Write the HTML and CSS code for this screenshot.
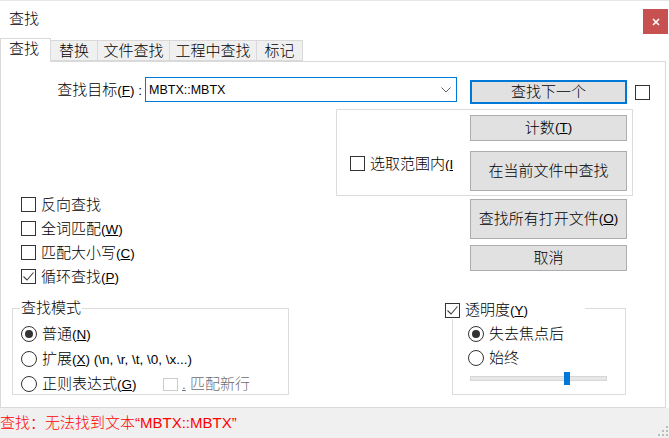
FILE: index.html
```html
<!DOCTYPE html>
<html lang="zh-CN">
<head>
<meta charset="utf-8">
<title>查找</title>
<link rel="stylesheet" href="styles.css">
</head>
<body>
<div class="dialog">
  <div class="titlebar">
    <span class="title">查找</span>
    <div class="close"><svg width="8" height="8" viewBox="0 0 8 8"><path d="M1 1 L7 7 M7 1 L1 7" stroke="#fff" stroke-width="1.6" fill="none"/></svg></div>
  </div>
  <div class="tabs">
    <div class="tab active">查找</div>
    <div class="tab t1">替换</div>
    <div class="tab t2">文件查找</div>
    <div class="tab t3">工程中查找</div>
    <div class="tab t4">标记</div>
  </div>
  <div class="panel">
    <div class="row1">
      <div class="find-label">查找目标<span class="k">(<u>F</u>) :</span></div>
      <div class="combo"><span class="combo-text">MBTX::MBTX</span><svg class="chev" width="10" height="6" viewBox="0 0 10 6"><polyline points="0.5,0.5 5,5 9.5,0.5" stroke="#606060" stroke-width="1" fill="none"/></svg></div>
      <div class="btn default">查找下一个</div>
      <span class="box"></span>
    </div>
    <div class="selgroup">
      <div class="check sel"><span class="box"></span><span class="txt">选取范围内<span class="k">(<u>I</u>)</span></span></div>
      <div class="btncol">
        <div class="btn h26">计数<span class="k">(<u>T</u>)</span></div>
        <div class="btn h40">在当前文件中查找</div>
      </div>
    </div>
    <div class="row3">
      <div class="checks">
        <div class="check"><span class="box"></span><span>反向查找</span></div>
        <div class="check"><span class="box"></span><span>全词匹配<span class="k">(<u>W</u>)</span></span></div>
        <div class="check"><span class="box"></span><span>匹配大小写<span class="k">(<u>C</u>)</span></span></div>
        <div class="check"><span class="box"><svg width="13" height="13" viewBox="0 0 13 13"><polyline points="1.5,6.5 5,10 11.5,2.5" stroke="#404040" stroke-width="1.1" fill="none"/></svg></span><span>循环查找<span class="k">(<u>P</u>)</span></span></div>
      </div>
      <div class="btncol2">
        <div class="btn h40">查找所有打开文件<span class="k">(<u>O</u>)</span></div>
        <div class="btn h26">取消</div>
      </div>
    </div>
    <div class="row4">
      <div class="group mode">
        <div class="legend">查找模式</div>
        <div class="radios">
          <div class="radio"><span class="circle on"></span><span>普通<span class="k">(<u>N</u>)</span></span></div>
          <div class="radio"><span class="circle"></span><span>扩展<span class="k">(<u>X</u>) (\n, \r, \t, \0, \x...)</span></span></div>
          <div class="radio"><span class="circle"></span><span class="rx-text">正则表达式<span class="k">(<u>G</u>)</span></span>
            <div class="check disabled"><span class="box"></span><span><u class="k">.</u> 匹配新行</span></div>
          </div>
        </div>
      </div>
      <div class="group trans">
        <div class="tlegend"><span class="box"><svg width="13" height="13" viewBox="0 0 13 13"><polyline points="1.5,6.5 5,10 11.5,2.5" stroke="#404040" stroke-width="1.1" fill="none"/></svg></span><span>透明度<span class="k">(<u>Y</u>)</span></span></div>
        <div class="radios tr">
          <div class="radio"><span class="circle on"></span><span>失去焦点后</span></div>
          <div class="radio"><span class="circle"></span><span>始终</span></div>
        </div>
        <div class="slider"><div class="track"></div><div class="thumb"></div></div>
      </div>
    </div>
  </div>
  <div class="status">
    <span class="msg">查找：无法找到文本“MBTX::MBTX”</span>
    <svg class="grip" width="13" height="13" viewBox="0 0 13 13">
      <rect x="10" y="2" width="2" height="2" fill="#bdbdbd"/>
      <rect x="6" y="6" width="2" height="2" fill="#bdbdbd"/>
      <rect x="10" y="6" width="2" height="2" fill="#bdbdbd"/>
      <rect x="2" y="10" width="2" height="2" fill="#bdbdbd"/>
      <rect x="6" y="10" width="2" height="2" fill="#bdbdbd"/>
      <rect x="10" y="10" width="2" height="2" fill="#bdbdbd"/>
    </svg>
  </div>
</div>
</body>
</html>
```
FILE: styles.css
```css
* { box-sizing: border-box; }
html, body { margin: 0; padding: 0; }
body {
  width: 669px;
  height: 438px;
  overflow: hidden;
  background: #fff;
  font-family: "Liberation Sans", "Noto Sans CJK SC", sans-serif;
  font-size: 15px;
  font-weight: 300;
  line-height: 20px;
  color: #000;
}
.dialog { display: flex; flex-direction: column; height: 438px; }

.titlebar {
  height: 38px;
  border-top: 1px solid #e6e6e6;
  display: flex;
  align-items: flex-start;
  flex: none;
}
.title { margin: 8px 0 0 9px; line-height: 20px; }
.close {
  margin: 8px 1px 0 auto;
  width: 25px;
  height: 25px;
  background: #c75050;
  display: flex;
  align-items: center;
  justify-content: center;
}

.tabs { height: 23px; display: flex; align-items: flex-end; flex: none; }
.tab {
  height: 21px;
  border: 1px solid #d9d9d9;
  border-left: none;
  background: #f0f0f0;
  line-height: 19px;
  text-align: center;
  white-space: nowrap;
}
.tab.active {
  width: 51px;
  height: 24px;
  border-left: 1px solid #d9d9d9;
  border-bottom: none;
  background: #fff;
  text-align: left;
  padding-left: 8px;
  margin-bottom: -1px;
  position: relative;
  z-index: 1;
}
.t1 { width: 47px; }
.t2 { width: 72px; }
.t3 { width: 87px; }
.t4 { width: 46px; }

.panel {
  width: 666px;
  height: 347px;
  border: 1px solid #d9d9d9;
  flex: none;
}

.k { font-size: 13.5px; }
u { text-decoration-thickness: 1px; text-underline-offset: 1px; }

.row1 { display: flex; align-items: flex-start; margin-top: 15px; }
.find-label {
  width: 144px;
  text-align: right;
  padding-right: 3px;
  line-height: 25px;
  white-space: nowrap;
}
.combo {
  width: 312px;
  height: 25px;
  border: 1px solid #0078d7;
  display: flex;
  align-items: center;
  padding-left: 3px;
  font-size: 12.5px;
}
.combo-text { flex: 1; }
.chev { margin-right: 5px; margin-top: 1px; }

.btn {
  width: 157px;
  background: #e1e1e1;
  border: 1px solid #adadad;
  display: flex;
  align-items: center;
  justify-content: center;
  white-space: nowrap;
}
.btn.default { height: 24px; border: 2px solid #0078d7; margin: 3px 0 0 13px; }
.h26 { height: 26px; }
.h40 { height: 40px; }
.row1 > .box { margin: 8px 0 0 8px; }

.box {
  width: 15px;
  height: 15px;
  border: 1px solid #333;
  background: #fff;
  flex: none;
  display: flex;
  align-items: center;
  justify-content: center;
}

.check {
  display: flex;
  align-items: center;
  gap: 5px;
  height: 15px;
  line-height: 15px;
  white-space: nowrap;
}

.selgroup {
  margin: 5px 0 0 335px;
  width: 297px;
  height: 87px;
  border: 1px solid #dcdcdc;
  display: flex;
  justify-content: space-between;
  align-items: flex-start;
}
.check.sel { margin: 46px 0 0 13px; width: 103px; overflow: hidden; }
.btncol { margin: 5px 5px 0 0; display: flex; flex-direction: column; gap: 10px; }

.row3 { display: flex; align-items: flex-start; }
.checks {
  margin: 1px 0 0 20px;
  width: 449px;
  display: flex;
  flex-direction: column;
  gap: 9px;
}
.btncol2 { margin-top: 3px; display: flex; flex-direction: column; gap: 6px; }

.row4 { display: flex; align-items: flex-start; margin-top: 24px; }
.group {
  height: 87px;
  border: 1px solid #dcdcdc;
  display: flex;
  flex-direction: column;
  align-items: flex-start;
}
.mode { margin-left: 11px; width: 277px; }
.trans { margin-left: 163px; width: 174px; }
.legend {
  margin: -10px 0 0 7px;
  padding: 0 1px;
  line-height: 18px;
  background: #fff;
}
.radios { display: flex; flex-direction: column; gap: 9px; margin: 9px 0 0 8px; }
.radios.tr { gap: 8px; margin: 7px 0 0 15px; }
.radio {
  display: flex;
  align-items: center;
  gap: 5px;
  height: 16px;
  line-height: 16px;
  white-space: nowrap;
}
.circle {
  width: 16px;
  height: 16px;
  border-radius: 50%;
  border: 1px solid #333;
  background: #fff;
  flex: none;
  display: flex;
  align-items: center;
  justify-content: center;
}
.circle.on::after {
  content: "";
  width: 8px;
  height: 8px;
  border-radius: 50%;
  background: #333;
}
.rx-text { width: 116px; }
.check.disabled { gap: 4px; color: #6d6d6d; }
.check.disabled .box { border-color: #cccccc; height: 13px; }

.tlegend {
  margin: -8px 0 0 -8px;
  width: 140px;
  height: 18px;
  background: #fff;
  display: flex;
  align-items: center;
  gap: 5px;
  line-height: 18px;
  white-space: nowrap;
}
.slider {
  position: relative;
  width: 137px;
  height: 13px;
  margin: 6px 0 0 17px;
  display: flex;
  align-items: center;
}
.track {
  width: 100%;
  height: 5px;
  background: #e7e7e7;
  border: 1px solid #d6d6d6;
}
.thumb {
  position: absolute;
  left: 94px;
  top: 0;
  width: 6px;
  height: 13px;
  background: #0078d7;
}

.status {
  height: 30px;
  background: #f0f0f0;
  display: flex;
  align-items: center;
  color: #ff0000;
  flex: none;
}
.msg { font-size: 15px; line-height: 30px; white-space: nowrap; }
.grip { margin-left: auto; align-self: flex-end; margin-bottom: 1px; }
```
